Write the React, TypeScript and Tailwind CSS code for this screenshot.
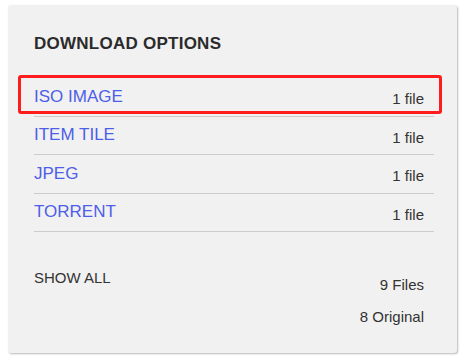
import React from "react";

const rows = [
  { label: "ISO IMAGE", count: "1 file", highlight: true },
  { label: "ITEM TILE", count: "1 file" },
  { label: "JPEG", count: "1 file" },
  { label: "TORRENT", count: "1 file" },
];

export default function App() {
  return (
    <div
      className="min-h-[362px] w-[466px] bg-white pl-[8px] pt-[5px]"
      style={{ fontFamily: '"Liberation Sans", Arial, sans-serif' }}
    >
      <div className="w-[449px] rounded-[3px] bg-[#f1f1f1] pl-[26px] pr-[23px] pt-[27px] pb-[26px] shadow-[1px_1px_2px_rgba(0,0,0,0.28)]">
        <h2 className="text-[17px] font-bold leading-[24px] tracking-[0.25px] text-[#2b2b2b]">
          DOWNLOAD OPTIONS
        </h2>
        <div className="mt-[21px]">
          {rows.map((r) => (
            <div
              key={r.label}
              className="relative flex h-[38.5px] justify-between border-t border-[#cccccc]"
            >
              <a className="pt-[8.5px] text-[17px] leading-[20px] text-[#4d5ee8]">
                {r.label}
              </a>
              <span className="pr-[10px] pt-[11px] text-[15px] leading-[20px] text-[#333333]">
                {r.count}
              </span>
              {r.highlight && (
                <div className="pointer-events-none absolute left-[-16px] top-[-3px] h-[39px] w-[424px] rounded-[3px] border-[3px] border-[#ff1c1c]" />
              )}
            </div>
          ))}
        </div>
        <div className="flex justify-between border-t border-[#cccccc]">
          <span className="pt-[36px] text-[15px] leading-[20px] text-[#333333]">SHOW ALL</span>
          <div className="flex flex-col items-end pr-[10px] pt-[43px] text-[15px] leading-[20px] text-[#333333]">
            <span>9 Files</span>
            <span className="mt-[12px]">8 Original</span>
          </div>
        </div>
      </div>
    </div>
  );
}
